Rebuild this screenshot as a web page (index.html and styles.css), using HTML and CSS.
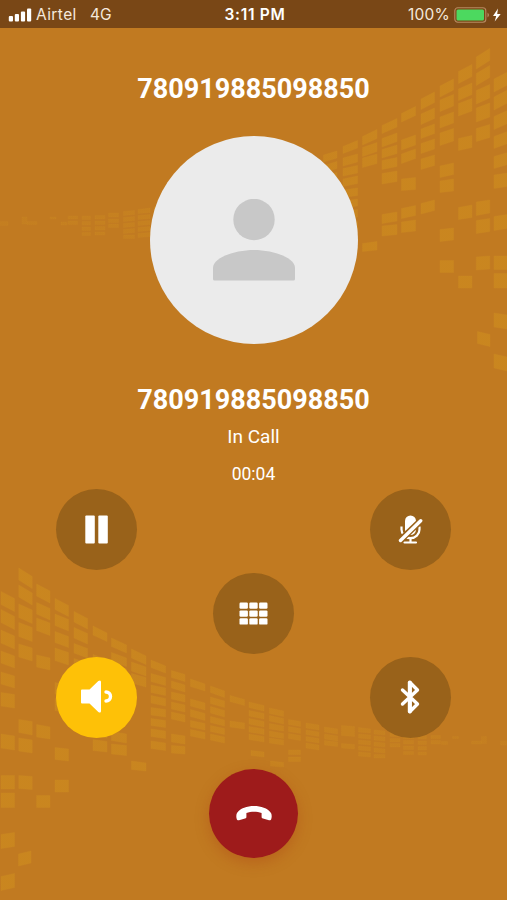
FILE: index.html
```html
<!DOCTYPE html>
<html lang="en">
<head>
    <meta charset="UTF-8">
    <meta name="viewport" content="width=device-width, initial-scale=1.0">
    <title>In Call</title>
    <link rel="stylesheet" href="styles.css">
</head>
<body>
    <!-- Equalizer tiles, the lower band mirrors the upper one -->
    <svg class="pattern" viewBox="0 0 507 900" aria-hidden="true">
        <defs>
            <linearGradient id="fade" gradientUnits="userSpaceOnUse" x1="0" y1="0" x2="400" y2="0">
                <stop offset="0" stop-color="#cb881f" stop-opacity="0.3"/>
                <stop offset="0.5" stop-color="#cb881f" stop-opacity="0.55"/>
                <stop offset="1" stop-color="#cb881f" stop-opacity="0.85"/>
            </linearGradient>
            <g id="tiles" fill="url(#fade)" stroke="url(#fade)" stroke-width="0.4" stroke-linejoin="round">
                <path d="M494 79l13.5-7v13l-13.5 7zM494 97l13.5-7v13l-13.5 7zM494 116.5l13.5-6v13l-13.5 6zM494 136.5l13.5-5v12l-13.5 5zM494 156.5l13.5-4v12l-13.5 4zM494 175l13.5-2v13.5l-13.5 2zM494 216.5l13.5-2v14l-13.5 2zM494 256h13.5v13.5h-13.5zM494 273.5h13.5v14.5h-13.5zM494 313l13.5 2v14l-13.5-2zM494 354l13.5 3v14l-13.5-3z"/>
                <path d="M476.3 57l13.4-8.5v12l-13.4 8.5zM476.3 73.5l13.4-8v12l-13.4 8zM476.3 90.5l13.4-6v13.5l-13.4 6zM476.3 108l13.4-5v14l-13.4 5zM476.3 128.5l13.4-4v13l-13.4 4zM476.3 202l13.4-2v13l-13.4 2.500zM476.3 220.500l13.4-2v13l-13.4 2zM476.3 257l13.4-1v13l-13.4 1zM477.500 331.500l12.500 3v12l-12.500-3z"/>
                <path d="M458.500 71.500l13.4-7v12l-13.4 7zM458.500 89l13.4-6v11.500l-13.4 6zM458.500 103.500l13.4-5v12.500l-13.4 5zM458.500 138.500l13.4-3v12l-13.4 3zM458.500 207.500l13.4-2.500v12.500l-13.4 2zM458.500 276h13.4v12h-13.4z"/>
                <path d="M440 86l13.500-7v11l-13.500 7zM440 100l13.500-5.500v11.500l-13.500 5.500zM440 117l13.500-5v11l-13.500 5zM440 133l13.500-4.500v12.500l-13.500 4.500zM440 166l13.500-3v11.500l-13.500 3zM440 181l13.500-2v12l-13.500 1.500zM440 229.500l13.500-1.500v12l-13.500 1.500zM440 260.500h13.500v12h-13.500z"/>
                <path d="M421 99l13.500-7v10.500l-13.500 7zM421 114l13.500-6v10.500l-13.500 6zM421 129l13.500-5v9.500l-13.500 5zM421 143.500l13.500-4.500v10l-13.500 4.500zM421 159l13.500-4v10.500l-13.500 4zM421 203.500l13.500-3.500v10.500l-13.500 3.500z"/>
                <path d="M401.500 113.500l14-7v9l-14 6.500zM401.500 140l14-5v10l-14 5zM401.500 154l14-5v9.500l-14 5zM401.500 179l14-1.500v12l-14 1zM401.500 208.500l14-3v10l-14 3zM401.500 222l14-2v11l-14 1.500z"/>
                <path d="M382 125.500l15-7v8.500l-15 6.500zM382 138.500l15-5.500v8.500l-15 5.500zM382 149.500l15-4.500v8.500l-15 4.500zM382 160.500l15-3v9l-15 3zM382 173.500l15-2.500v10.500l-15 2.500zM382 214.500l15-2.500v9l-15 2.500zM382 226l15-1.500v10l-15 1.500z"/>
                <path d="M362.500 136.500l14.500-7v9l-14.500 6.500zM362.500 147.500l14.500-5v9l-14.500 5zM362.500 158l14.500-4v9.500l-14.500 4zM362.500 243.500l14.500-2v8.500l-14.500 1.500z"/>
                <path d="M343 146.500l14.500-6v7.500l-14.500 5.500zM343 158l14.500-4v8l-14.500 4zM343 168.500l14.500-3v7.500l-14.500 3zM343 179l14.500-3v7.500l-14.500 3zM343 190l14.500-2v7.500l-14.500 2zM343 201l14.500-2v7l-14.500 2zM343 211.500l14.500-2v7.500l-14.500 2zM343 223.500l14.500-2v7.500l-14.500 2z"/>
                <path d="M323.500 155l13.500-4v7l-13.500 4zM323.500 165.500l13.500-4v7l-13.500 4zM323.500 175.500l13.500-3v7l-13.500 3zM323.500 185.500l13.500-3v7l-13.500 3zM323.500 195.500l13.500-3v7l-13.500 3zM323.500 216.500l13.500-2v8l-13.500 2zM323.500 227l13.500-1v7.500l-13.500 1z"/>
                <path d="M303.500 164.500l14.500-5v7.500l-14.500 4.500zM303.500 183.500l14.500-4v7l-14.500 4zM303.500 194l14.500-4v7l-14.500 4zM303.500 204l14.500-3v6.500l-14.500 3zM303.500 213l14.500-3v6.500l-14.500 3z"/>
                <path d="M284 171.500l14-5v6.500l-14 5zM284 181.500l14-4v6.500l-14 4zM284 191l14-4v6.500l-14 4zM284 200.500l14-3.500v6l-14 3.500zM284 209l14-3v6l-14 3zM284 217.500l14-3v6l-14 3z"/>
                <path d="M264 180l14.500-4v6l-14.500 4zM264 203.500l14.500-2v6l-14.500 2z"/>
                <path d="M244.500 186l15-3.500v5.500l-15 3.500zM244.500 194l15-3v5.500l-15 3zM244.500 202l15-3v5.500l-15 3zM244.500 209.500l15-2.500v5.500l-15 2.500zM244.500 217l15-2.500v5.500l-15 2.500zM244.500 232.500l13-1.500v5l-13 1.500z"/>
                <path d="M225 191.500l14-3v5.500l-14 3zM225 199l14-3v5.500l-14 3zM225 206.500l14-2.500v5.500l-14 2zM225 214l14-2.500v5.500l-14 2zM225 220.500l14-2v5l-14 2zM225 243l13-1.500v5l-13 1z"/>
                <path d="M208 202l12-2v5l-12 2zM208 209l12-2v5l-12 2zM208 216l12-2v5l-12 2zM208 230.500h12v4.500h-12zM208 237.500h12v4.500h-12z"/>
                <path d="M189.500 205.500l13-2v5l-13 2zM189.500 212.500l13-2v4.500l-13 2zM189.500 219l13-2v4.500l-13 2zM189.500 225.500l13-2v5l-13 2z"/>
                <path d="M171 209.500l13-2v5l-13 2zM171 216.500l13-2v5l-13 2zM171 222.500l13-1.500v4.500l-13 1.500zM154 207l13-1v10l-13 1zM154 225l13-1v4.500l-13 1z"/>
                <path d="M138 209.500l12-1.500v4.500l-12 1zM138 215.500l12-1v4l-12 1zM138 221.500l12-1v4l-12 1zM138 227.500l12-1v4l-12 1zM138 233.500l12-1v4l-12 1zM123.500 211.500l11-1v4l-11 1zM123.500 217.500l11-1v4l-11 1zM123.500 223.500l11-1v4l-11 1zM123.500 229.500l11-1v4l-11 1zM123.500 235h11v3.500h-11z"/>
                <path d="M108.500 213h10v4h-10zM108.500 219h10v3.500h-10zM108.500 224h10v3.500h-10zM95 215.500h10v3.500h-10zM95 221h10v3.500h-10zM95 226.500h10v3.500h-10zM95 232h10v3h-10zM82 216h8.500v3.500h-8.500zM82 221.500h8.500v3.500h-8.500zM82 227h8.500v3.500h-8.500zM82 232.500h8.500v3h-8.500z"/>
                <path d="M68 216h9.500v3h-9.500zM68 221h9.500v3.500h-9.500zM61 222h6v3h-6zM50 217h6v2h-6zM22 217h5v7h-5zM27 221.500h10v3h-10zM0 221.500h8v4h-8z"/>
            </g>
        </defs>
        <use href="#tiles"/>
        <use href="#tiles" transform="translate(508.5 519.5) scale(-1 1)"/>
    </svg>

    <header class="status-bar">
        <div class="status-left">
            <svg class="signal" viewBox="0 0 24 14" width="24" height="14" fill="#fff">
                <rect x="0.800" y="8" width="4.200" height="5.500" rx="1"/>
                <rect x="6.800" y="6" width="4.200" height="7.500" rx="1"/>
                <rect x="12.900" y="3.500" width="4.200" height="10" rx="1"/>
                <rect x="19" y="0.500" width="4.200" height="13" rx="1"/>
            </svg>
            <span class="carrier">Airtel</span>
            <span class="network">4G</span>
        </div>
        <div class="status-time">3:11 PM</div>
        <div class="status-right">
            <span class="percent">100%</span>
            <svg class="battery" viewBox="0 0 48 16" width="48" height="16">
                <rect x="0.800" y="0.800" width="31" height="14.400" rx="3" fill="none" stroke="#b78b62" stroke-width="1.100"/>
                <rect x="2.500" y="2.500" width="27.500" height="11" rx="1.500" fill="#4cd95f"/>
                <path d="M33.500 5.500q3 2.500 0 5z" fill="#b78b62"/>
                <path d="M44 1.500l-5 7.500h3.200l-1.500 5.500 6-7.500h-3.500z" fill="#fff"/>
            </svg>
        </div>
    </header>

    <main class="call">
        <h1 class="number">780919885098850</h1>

        <div class="avatar">
            <svg viewBox="0 0 82 82" width="82" height="82" fill="#c8c8c8">
                <circle cx="41" cy="20.500" r="20.700"/>
                <path d="M0 80V69C0 58 23 51 41 51s41 7 41 18v11q0 1.500-1.500 1.500h-79Q0 81.500 0 80z"/>
            </svg>
        </div>

        <h2 class="number">780919885098850</h2>
        <p class="state">In Call</p>
        <p class="timer">00:04</p>

        <div class="controls">
            <button class="control hold" aria-label="Hold">
                <svg viewBox="0 0 25 29" width="25" height="29" fill="#fff">
                    <rect x="1.300" y="0.500" width="9.500" height="28" rx="1"/>
                    <rect x="14.300" y="0.500" width="9.500" height="28" rx="1"/>
                </svg>
            </button>
            <button class="control mute" aria-label="Mute">
                <svg viewBox="0 0 25 29" width="25" height="29">
                    <rect x="7" y="0.500" width="11" height="19.500" rx="5.500" fill="#fff"/>
                    <path d="M3.500 11.500v3a9 8.700 0 0 0 18 0v-3" fill="none" stroke="#fff" stroke-width="2.200"/>
                    <path d="M12.500 23v4M6.500 27.500h11.500" fill="none" stroke="#fff" stroke-width="2.200" stroke-linecap="round"/>
                    <path d="M0 27.500L25 3.500" stroke="#99621a" stroke-width="6.400"/>
                    <path d="M2.500 25.500L22.700 5.800" stroke="#fff" stroke-width="3.400" stroke-linecap="round"/>
                </svg>
            </button>
            <button class="control keypad" aria-label="Keypad">
                <svg viewBox="0 0 29 23" width="29" height="23" fill="#fff">
                    <rect x="0.500" y="0.500" width="8.400" height="6.300" rx="1.200"/>
                    <rect x="10.300" y="0.500" width="8.400" height="6.300" rx="1.200"/>
                    <rect x="20.100" y="0.500" width="8.400" height="6.300" rx="1.200"/>
                    <rect x="0.500" y="8.400" width="8.400" height="6.300" rx="1.200"/>
                    <rect x="10.300" y="8.400" width="8.400" height="6.300" rx="1.200"/>
                    <rect x="20.100" y="8.400" width="8.400" height="6.300" rx="1.200"/>
                    <rect x="0.500" y="16.300" width="8.400" height="6.300" rx="1.200"/>
                    <rect x="10.300" y="16.300" width="8.400" height="6.300" rx="1.200"/>
                    <rect x="20.100" y="16.300" width="8.400" height="6.300" rx="1.200"/>
                </svg>
            </button>
            <button class="control speaker active" aria-label="Speaker">
                <svg viewBox="0 0 33 34" width="33" height="34">
                    <path d="M2 9.500h7.500L18.300 1Q21-.5 21 2v29Q21 33.500 18.300 32L9.500 23.500H2q-1 0-1-1V10.500q0-1 1-1z" fill="#fff"/>
                    <path d="M26 12a4.500 4.500 0 0 1 0 9" fill="none" stroke="#fff" stroke-width="3.400" stroke-linecap="round"/>
                </svg>
            </button>
            <button class="control bluetooth" aria-label="Bluetooth">
                <svg viewBox="0 0 21 35" width="21" height="35" fill="none" stroke="#fff" stroke-width="3.400" stroke-linecap="round" stroke-linejoin="round">
                    <path d="M2.500 10L17.500 24l-7.500 7.500V2.500l7.500 7.500L2.500 24"/>
                    <path d="M9.800 2.500v29" stroke-width="4"/>
                </svg>
            </button>
        </div>

        <button class="hangup" aria-label="End call">
            <svg viewBox="0 0 36 16" width="36" height="16">
                <path d="M1 8C4.500 3 11 1 18 1s13.500 2 17 7c1 2 .8 4.500.2 6.200-.4 1.200-1.300 1.200-2.200 1L27 13.500c-1-.3-1.400-.8-1.400-1.800V8C21 6.200 15 6.200 10.400 8v3.700c0 1-.4 1.500-1.400 1.800L3 15.200c-.9.200-1.800.2-2.200-1C.2 12.500 0 10 1 8z" fill="#fff"/>
            </svg>
        </button>
    </main>
</body>
</html>
```

FILE: styles.css
```css
* {
    margin: 0;
    padding: 0;
    box-sizing: border-box;
}

body {
    background: #c17a21;
    color: #fff;
    font-family: Roboto, sans-serif;
    height: 100vh;
    overflow: hidden;
    position: relative;
}

.pattern {
    position: absolute;
    top: 0;
    left: 0;
    width: 507px;
    height: 900px;
    z-index: -1;
}

.status-bar {
    display: grid;
    grid-template-columns: 1fr auto 1fr;
    align-items: center;
    height: 28px;
    padding: 2px 5px 0 8px;
    background: #794716;
    color: #f5e9dd;
    font-family: Inter, sans-serif;
    font-size: 15.5px;
    line-height: 26px;
}

.status-left,
.status-right {
    display: flex;
    align-items: center;
}

.status-right {
    justify-content: flex-end;
}

.signal {
    margin-right: 4px;
}

.carrier {
    width: 54px;
    letter-spacing: 0.4px;
}

.status-time {
    color: #fff;
    font-weight: 600;
    letter-spacing: 0.7px;
}

.percent {
    margin-right: 4px;
    letter-spacing: 0.2px;
}

.call {
    display: flex;
    flex-direction: column;
    align-items: center;
    padding-top: 44px;
}

.number {
    font-size: 27px;
    font-weight: 700;
    line-height: 34px;
}

.avatar {
    display: flex;
    align-items: center;
    justify-content: center;
    width: 208px;
    height: 208px;
    margin: 29.5px 0 39.5px;
    border-radius: 50%;
    background: #ebebeb;
}

.state {
    margin-top: 8px;
    font-size: 19px;
    line-height: 24px;
}

.timer {
    margin-top: 14px;
    font-size: 17.5px;
    line-height: 22px;
}

.controls {
    display: grid;
    grid-template-columns: repeat(3, 81px);
    grid-template-rows: repeat(3, 81px);
    grid-template-areas:
        "hold . mute"
        ". keypad ."
        "speaker . bluetooth";
    gap: 3px 76px;
    margin-top: 3.5px;
}

.control,
.hangup {
    display: flex;
    align-items: center;
    justify-content: center;
    border: none;
    border-radius: 50%;
    cursor: pointer;
}

.control {
    background: #99621a;
}

.control.active {
    background: #fec107;
}

.hold {
    grid-area: hold;
}

.mute {
    grid-area: mute;
}

.keypad {
    grid-area: keypad;
}

.speaker {
    grid-area: speaker;
}

.bluetooth {
    grid-area: bluetooth;
}

.hangup {
    width: 89px;
    height: 89px;
    margin-top: 31px;
    background: #9e1b1b;
    box-shadow: 0 5px 14px rgba(170, 60, 20, 0.35);
}
```
